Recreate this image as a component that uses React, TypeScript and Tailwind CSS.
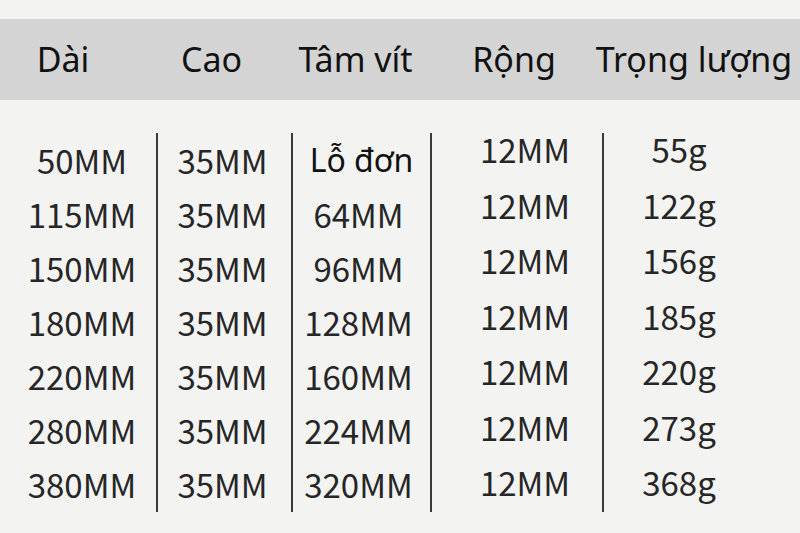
const headers = [
  { label: "Dài", pad: "pr-[30px]" },
  { label: "Cao", pad: "pr-[24px]" },
  { label: "Tâm vít", pad: "pr-[10px]" },
  { label: "Rộng", pad: "pr-[4px]" },
  { label: "Trọng lượng", pad: "pr-[14px]" },
];

const dai = ["50MM", "115MM", "150MM", "180MM", "220MM", "280MM", "380MM"];
const cao = ["35MM", "35MM", "35MM", "35MM", "35MM", "35MM", "35MM"];
const tam = ["Lỗ đơn", "64MM", "96MM", "128MM", "160MM", "224MM", "320MM"];
const rong = ["12MM", "12MM", "12MM", "12MM", "12MM", "12MM", "12MM"];
const nang = ["55g", "122g", "156g", "185g", "220g", "273g", "368g"];

const grid = "grid grid-cols-[156px_135px_139px_172px_198px]";

export default function App() {
  return (
    <div className="h-[533px] w-[800px] overflow-hidden bg-[#f3f3f2] pt-[19px] font-['Noto_Sans_CJK_SC',sans-serif] text-[#262626]">
      <div className={`${grid} h-[81px] items-center bg-[#d4d4d4] font-['Noto_Sans',sans-serif] text-[34px] text-[#111]`}>
        {headers.map((h) => (
          <div key={h.label} className={`flex justify-center whitespace-nowrap ${h.pad}`}>
            {h.label}
          </div>
        ))}
      </div>

      <div className={`${grid} mt-[33px] h-[379px] text-[33px]`}>
        <div className="flex flex-col items-center pl-[8px]">
          {dai.map((t) => (
            <div key={t} className="h-[54px] leading-[54px]">{t}</div>
          ))}
        </div>
        <div className="flex flex-col items-center border-l-2 border-[#3a3a3a] pr-[4px]">
          {cao.map((t, i) => (
            <div key={i} className="h-[54px] leading-[54px]">{t}</div>
          ))}
        </div>
        <div className="flex flex-col items-center border-l-2 border-[#3a3a3a] pr-[6px]">
          {tam.map((t, i) => (
            <div
              key={i}
              className={`h-[54px] whitespace-nowrap leading-[54px] ${i === 0 ? "pl-[6px] font-['Noto_Sans',sans-serif] text-[32px] text-[#111]" : ""}`}
            >
              {t}
            </div>
          ))}
        </div>
        <div className="flex flex-col items-center border-l-2 border-[#3a3a3a] pl-[16px]">
          <div className="-mt-[11px] flex flex-col items-center">
            {rong.map((t, i) => (
              <div key={i} className="h-[55.5px] leading-[55.5px]">{t}</div>
            ))}
          </div>
        </div>
        <div className="flex flex-col items-center border-l-2 border-[#3a3a3a] pr-[46px]">
          <div className="-mt-[11px] flex flex-col items-center">
            {nang.map((t) => (
              <div key={t} className="h-[55.5px] leading-[55.5px]">{t}</div>
            ))}
          </div>
        </div>
      </div>
    </div>
  );
}
